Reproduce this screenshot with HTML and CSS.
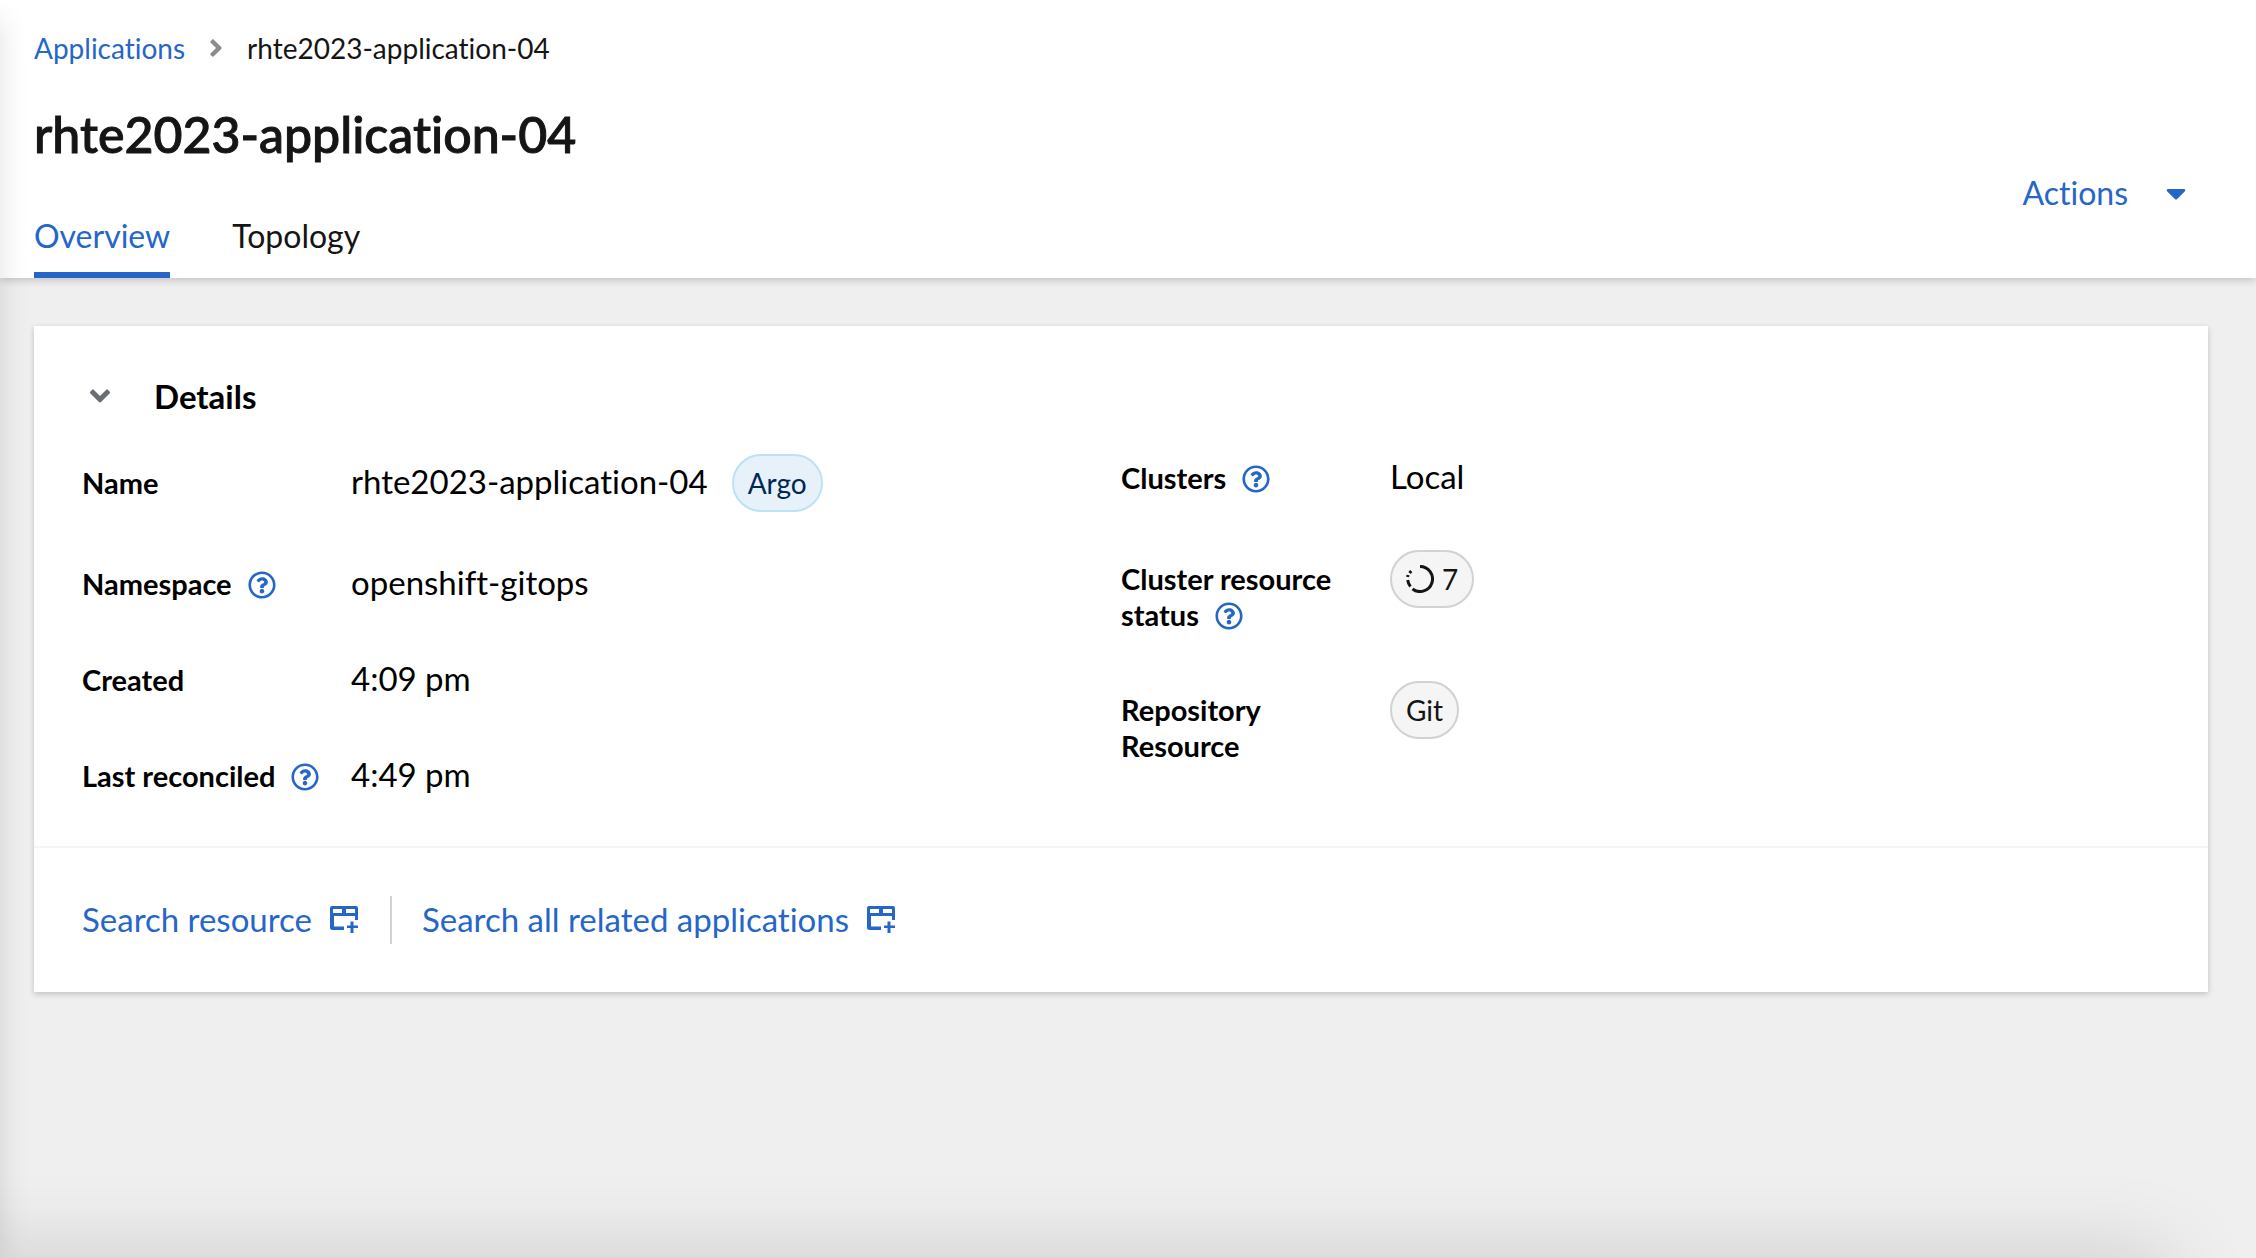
FILE: index.html
```html
<!DOCTYPE html>
<html lang="en">
<head>
<meta charset="utf-8">
<meta name="viewport" content="width=device-width, initial-scale=1">
<title>rhte2023-application-04</title>
<link rel="stylesheet" href="styles.css">
</head>
<body>
<svg class="sprite" aria-hidden="true">
  <symbol id="help" viewBox="0 0 512 512"><path d="M256 8C119.043 8 8 119.083 8 256c0 136.997 111.043 248 248 248s248-111.003 248-248C504 119.083 392.957 8 256 8zm0 448c-110.532 0-200-89.431-200-200 0-110.495 89.472-200 200-200 110.491 0 200 89.471 200 200 0 110.53-89.431 200-200 200zm107.244-255.2c0 67.052-72.421 68.084-72.421 92.863V300c0 6.627-5.373 12-12 12h-45.647c-6.627 0-12-5.373-12-12v-8.659c0-35.745 27.1-50.034 47.579-61.516 17.561-9.845 28.324-16.541 28.324-29.579 0-17.246-21.999-28.693-39.784-28.693-23.189 0-33.894 10.977-48.942 29.969-4.057 5.12-11.46 6.071-16.666 2.124l-27.824-21.098c-5.107-3.872-6.251-11.066-2.644-16.363C184.846 131.491 214.94 112 261.794 112c49.071 0 101.45 38.304 101.45 88.8zM298 368c0 23.159-18.841 42-42 42s-42-18.841-42-42 18.841-42 42-42 42 18.841 42 42z"/></symbol>
  <symbol id="launch" viewBox="0 0 28 28"><path fill-rule="evenodd" d="M2 1h24a2 2 0 0 1 2 2v12h-3v-4H4v10.500h10V25H2.500A2.500 2.500 0 0 1 0 22.500V3a2 2 0 0 1 2-2zm1 3v4h9V4zm13 0v4h9V4z"/><path d="M20.500 16.500h3v4H28v2.500h-4.500V28h-3v-5H17v-2.500h3.500z"/></symbol>
</svg>
<header class="page-header">
  <div class="heading">
    <nav class="breadcrumb" aria-label="Breadcrumb">
      <a href="#applications">Applications</a>
      <svg class="crumb-arrow" viewBox="0 0 256 512" aria-hidden="true"><path d="M224.3 273l-136 136c-9.4 9.4-24.6 9.4-33.9 0l-22.6-22.6c-9.4-9.4-9.4-24.6 0-33.9l96.4-96.4-96.4-96.4c-9.4-9.4-9.4-24.6 0-33.9L54.3 103c9.4-9.4 24.6-9.4 33.9 0l136 136c9.5 9.4 9.5 24.6.1 34z"/></svg>
      <span aria-current="page">rhte2023-application-04</span>
    </nav>
    <h1>rhte2023-application-04</h1>
    <nav class="tabs" aria-label="Application views">
      <a class="tab tab-current" href="#overview" aria-current="page">Overview</a>
      <a class="tab" href="#topology">Topology</a>
    </nav>
  </div>
  <button class="actions" type="button">Actions
    <svg viewBox="0 0 320 512" aria-hidden="true"><path d="M31.3 192h257.3c17.8 0 26.7 21.5 14.1 34.1L174.1 354.8c-7.8 7.8-20.5 7.8-28.3 0L17.2 226.1C4.6 213.5 13.5 192 31.3 192z"/></svg>
  </button>
</header>
<main>
  <section class="card" aria-labelledby="details-title">
    <div class="card-header">
      <button class="toggle" type="button" aria-expanded="true" aria-labelledby="details-title">
        <svg viewBox="0 0 320 512" aria-hidden="true"><path d="M143 352.3L7 216.3c-9.4-9.4-9.4-24.6 0-33.9l22.6-22.6c9.4-9.4 24.6-9.4 33.9 0l96.4 96.4 96.4-96.4c9.4-9.4 24.6-9.4 33.9 0l22.6 22.6c9.4 9.4 9.4 24.6 0 33.9l-136 136c-9.2 9.4-24.4 9.4-33.8 0z"/></svg>
      </button>
      <h2 id="details-title">Details</h2>
    </div>
    <div class="card-body">
      <dl>
        <div class="row"><dt>Name</dt><dd>rhte2023-application-04<span class="pill pill-blue">Argo</span></dd></div>
        <div class="row"><dt>Namespace<button class="help" type="button" aria-label="About namespace"><svg><use href="#help"/></svg></button></dt><dd>openshift-gitops</dd></div>
        <div class="row"><dt>Created</dt><dd>4:09 pm</dd></div>
        <div class="row"><dt>Last reconciled<button class="help" type="button" aria-label="About last reconciled"><svg><use href="#help"/></svg></button></dt><dd>4:49 pm</dd></div>
      </dl>
      <dl>
        <div class="row"><dt>Clusters<button class="help" type="button" aria-label="About clusters"><svg><use href="#help"/></svg></button></dt><dd>Local</dd></div>
        <div class="row"><dt>Cluster resource status<button class="help" type="button" aria-label="About cluster resource status"><svg><use href="#help"/></svg></button></dt><dd><span class="pill"><svg class="progress" viewBox="0 0 28 28" aria-hidden="true"><path d="M14 1.500a12.500 12.500 0 1 1-7.500 22.500M4.500 21.500a12.500 12.500 0 0 1-2.800-6.500M1.600 12l.4-2M3.500 8l1.700-2"/></svg>7</span></dd></div>
        <div class="row"><dt>Repository Resource</dt><dd><span class="pill">Git</span></dd></div>
      </dl>
    </div>
    <footer class="card-footer">
      <a href="#search-resource">Search resource<svg aria-hidden="true"><use href="#launch"/></svg></a>
      <a href="#search-related">Search all related applications<svg aria-hidden="true"><use href="#launch"/></svg></a>
    </footer>
  </section>
</main>
</body>
</html>
```
FILE: styles.css
```css
* { box-sizing: border-box; }

body {
  margin: 0;
  min-height: 100vh;
  overflow-x: hidden;
  background: #efefef;
  color: #000;
  font: 32px/44px Lato, "Open Sans", sans-serif;
  font-variant-ligatures: none;
}

/* soft shadows cast by the window's left and bottom edges */
body::before,
body::after {
  content: "";
  position: fixed;
  z-index: 1;
  pointer-events: none;
}
body::before {
  top: 20px;
  bottom: 0;
  right: 100%;
  width: 100px;
  box-shadow: 0 0 28px rgba(0, 0, 0, .12);
}
body::after {
  top: 100%;
  left: -100px;
  right: 88px;
  height: 100px;
  box-shadow: 0 0 88px rgba(0, 0, 0, .16);
}

h1, h2, dl, dd { margin: 0; }
a { color: #2566c8; text-decoration: none; }
svg { fill: currentColor; }
button {
  padding: 0;
  border: 0;
  background: none;
  color: #2566c8;
  font: inherit;
  cursor: pointer;
}
.sprite { display: none; }

.page-header {
  position: relative;
  display: flex;
  align-items: center;
  justify-content: space-between;
  padding: 28px 70px 0 34px;
  background: #fff;
  color: #151515;
  box-shadow: 0 2px 8px rgba(0, 0, 0, .2);
}
.breadcrumb {
  display: flex;
  align-items: center;
  gap: 24px;
  font-size: 28px;
  line-height: 40px;
}
.crumb-arrow { width: 14px; height: 28px; color: #8a8d90; }
h1 {
  margin-top: 36px;
  font-size: 50px;
  font-weight: 500;
  line-height: 60px;
  -webkit-text-stroke: 1px currentColor;
}
.tabs { display: flex; gap: 62px; margin-top: 50px; }
.tab {
  padding-bottom: 14px;
  border-bottom: 6px solid transparent;
  color: #151515;
}
.tab-current { border-color: #2566c8; color: #2566c8; }
.actions { display: flex; align-items: center; gap: 38px; margin-top: 80px; }
.actions svg { width: 20px; height: 32px; }

main { padding: 48px 48px 48px 34px; }
.card {
  background: #fff;
  box-shadow: 0 2px 6px rgba(0, 0, 0, .2);
}
.card-header { display: flex; align-items: center; padding: 48px 48px 36px; }
.toggle { display: grid; width: 36px; height: 44px; place-items: center; color: #6a6e73; }
.toggle svg { width: 20px; height: 32px; }
h2 { padding-left: 36px; font-size: 33px; font-weight: 700; line-height: 44px; }

.card-body {
  display: grid;
  grid-template-columns: 1fr 1fr;
  padding: 0 48px 46px;
}
dl { display: grid; align-content: start; gap: 48px; }
.row {
  display: grid;
  grid-template-columns: 269px 1fr;
  align-items: baseline;
  min-height: 48px;
}
dt { padding-right: 16px; font-size: 29px; font-weight: 700; line-height: 36px; }
dt:has(.help) { padding-right: 0; }
.help { height: 28px; margin-left: 16px; vertical-align: -4px; }
.help svg { display: block; width: 28px; height: 28px; }
dd { display: flex; align-items: baseline; gap: 24px; font-size: 33px; }
.pill {
  display: inline-flex;
  align-items: baseline;
  gap: 8px;
  padding: 7px 14px;
  border: 2px solid #d2d2d2;
  border-radius: 30px;
  background: #f5f5f5;
  color: #151515;
  font-size: 28px;
  line-height: 40px;
}
.pill-blue { border-color: #bee1f4; background: #e7f1fa; color: #002952; }
.progress {
  width: 28px;
  height: 28px;
  align-self: center;
  fill: none;
  stroke: currentColor;
  stroke-width: 3;
}

.card-footer {
  display: flex;
  padding: 48px;
  border-top: 2px solid #f5f5f5;
  font-size: 33px;
}
.card-footer a { display: flex; align-items: center; gap: 18px; height: 48px; padding-bottom: 2px; }
.card-footer a + a { margin-left: 32px; padding-left: 30px; border-left: 2px solid #d2d2d2; }
.card-footer svg { width: 28px; height: 28px; }
```
